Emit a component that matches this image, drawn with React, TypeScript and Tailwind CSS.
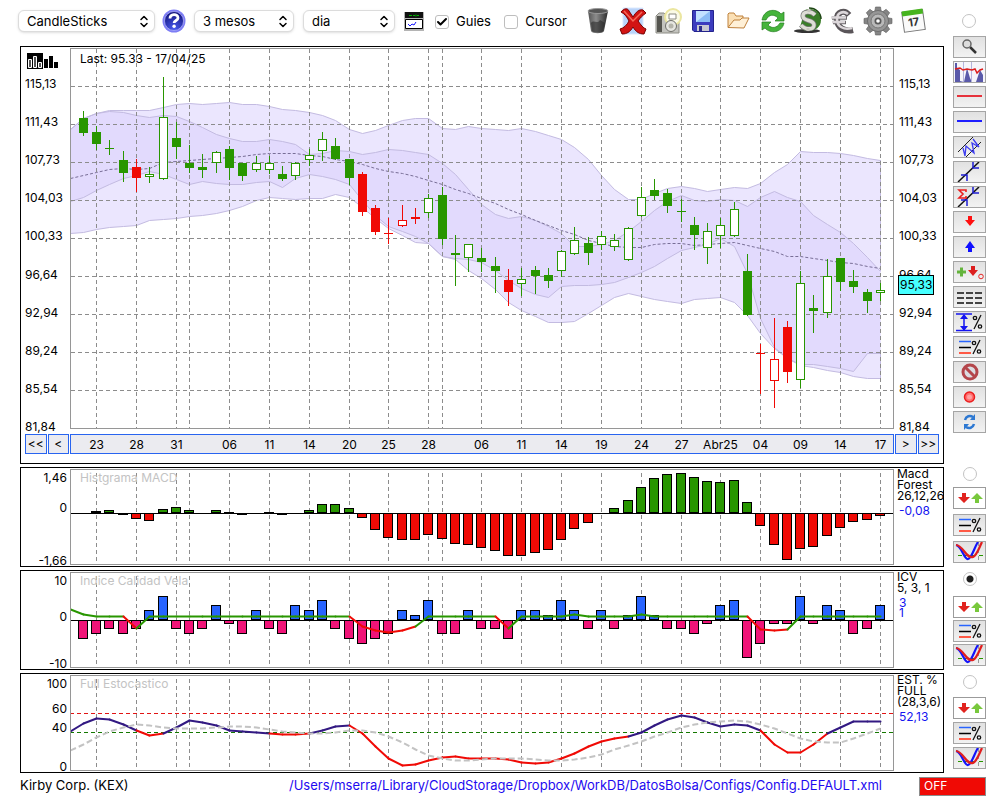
import { useState } from 'react';
import type { ReactNode } from 'react';
import { Check, ChevronDown, ChevronUp } from 'lucide-react';

type Pt = [number, number];
type Kind = 'g' | 'G' | 'r' | 'R';
type Candle = [number, number, number, number, Kind];

const GREEN = '#289600';
const RED = '#f00a05';
const PURPLE = '#321982';

// session index -> x on the chart
const xAt = (i: number) => (i < 0 ? 70 : Math.floor(83.4 + 13.283 * i));

const gridCols = [1, 4, 7, 8, 11, 14, 17, 20, 23, 26, 27, 30, 33, 36, 39, 42, 45, 48, 51, 54, 57, 60];
const gridRows = [86, 124, 162, 200, 238, 276, 314, 352, 390];

const dates: [number, string][] = [
  [1, '23'], [4, '28'], [7, '31'], [11, '06'], [14, '11'], [17, '14'], [20, '20'], [23, '25'], [26, '28'],
  [30, '06'], [33, '11'], [36, '14'], [39, '19'], [42, '24'], [45, '27'], [48, 'Abr25'], [51, '04'],
  [54, '09'], [57, '14'], [60, '17'],
];

const prices = ['115,13', '111,43', '107,73', '104,03', '100,33', '96,64', '92,94', '89,24', '85,54', '81,84'];

// high, body top, body bottom, low
const candles: Candle[] = [
  [111, 118, 133, 136, 'g'], [126, 132, 144, 150, 'g'], [140, 148, 149, 155, 'g'], [151, 160, 173, 182, 'g'],
  [159, 167, 178, 192, 'r'], [167, 174, 177, 183, 'G'], [77, 117, 179, 180, 'G'], [122, 138, 147, 159, 'g'],
  [145, 163, 168, 173, 'g'], [154, 167, 170, 178, 'g'], [151, 152, 163, 173, 'G'], [146, 149, 168, 180, 'g'],
  [163, 163, 176, 181, 'g'], [156, 163, 170, 172, 'G'], [156, 163, 170, 174, 'G'], [166, 174, 179, 181, 'g'],
  [162, 163, 176, 180, 'G'], [149, 155, 160, 166, 'G'], [132, 139, 151, 161, 'G'], [138, 146, 159, 160, 'g'],
  [159, 159, 178, 185, 'g'], [172, 174, 212, 216, 'r'], [205, 208, 232, 235, 'r'], [218, 233, 234, 244, 'r'],
  [205, 220, 226, 227, 'R'], [208, 217, 219, 224, 'r'], [194, 198, 213, 218, 'G'], [187, 195, 239, 245, 'g'],
  [235, 253, 255, 286, 'g'], [244, 244, 258, 272, 'G'], [248, 258, 262, 272, 'g'], [257, 266, 271, 293, 'g'],
  [269, 280, 292, 306, 'r'], [268, 279, 284, 296, 'G'], [266, 270, 276, 294, 'g'], [268, 275, 281, 288, 'g'],
  [250, 251, 271, 277, 'G'], [227, 240, 254, 255, 'G'], [237, 243, 253, 265, 'g'], [231, 236, 245, 250, 'G'],
  [234, 240, 247, 251, 'G'], [227, 228, 260, 261, 'G'], [187, 197, 216, 217, 'G'], [179, 190, 196, 200, 'g'],
  [189, 193, 206, 213, 'g'], [199, 211, 212, 222, 'g'], [217, 225, 235, 250, 'g'], [223, 231, 248, 264, 'G'],
  [218, 225, 236, 248, 'G'], [202, 209, 236, 237, 'G'], [254, 271, 315, 316, 'g'], [344, 353, 354, 394, 'r'],
  [318, 359, 381, 408, 'R'], [321, 327, 372, 383, 'r'], [271, 283, 380, 388, 'G'], [295, 308, 311, 333, 'g'],
  [259, 276, 313, 318, 'G'], [258, 258, 282, 291, 'g'], [270, 281, 287, 293, 'g'], [289, 292, 301, 313, 'g'],
  [283, 290, 293, 301, 'G'],
];

const outerTop = [129, 118, 113, 110, 110, 110, 110, 107, 104, 103, 104, 103, 102, 104, 104, 106, 109, 110, 112, 115, 120, 129, 133, 130, 125, 120, 118, 118, 128, 129, 126, 128, 129, 130, 128, 131, 135, 139, 147, 159, 175, 189, 199, 199, 193, 188, 186, 188, 191, 189, 187, 188, 183, 172, 164, 151, 152, 152, 153, 155, 158, 160];
const innerTop = [129, 118, 113, 111, 112, 115, 117, 115, 116, 121, 127, 134, 138, 141, 141, 139, 141, 144, 154, 153, 150, 151, 154, 152, 149, 150, 152, 154, 163, 174, 189, 204, 214, 218, 216, 220, 226, 233, 246, 246, 244, 240, 231, 221, 210, 201, 195, 200, 201, 199, 200, 206, 197, 191, 197, 201, 215, 224, 232, 243, 257, 271];
const innerLow = [201, 197, 190, 184, 178, 175, 171, 174, 179, 184, 181, 183, 184, 184, 182, 181, 187, 178, 174, 176, 179, 184, 200, 215, 226, 231, 236, 243, 256, 258, 259, 262, 270, 280, 288, 294, 297, 286, 285, 285, 284, 282, 277, 272, 266, 258, 250, 247, 244, 238, 246, 273, 318, 347, 358, 364, 364, 366, 368, 371, 353, 353];
const outerLow = [233, 232, 229, 227, 226, 225, 220, 219, 218, 216, 215, 213, 210, 206, 200, 197, 198, 199, 198, 198, 194, 197, 207, 218, 228, 235, 242, 243, 256, 259, 270, 278, 289, 302, 310, 316, 322, 322, 321, 313, 305, 297, 293, 296, 299, 301, 303, 299, 298, 297, 302, 315, 333, 348, 358, 365, 367, 370, 372, 376, 378, 378];
const middle = [178, 175, 172, 169, 168, 169, 168, 162, 161, 160, 159, 158, 157, 156, 154, 153, 153, 153, 155, 156, 159, 161, 164, 168, 171, 173, 176, 180, 184, 189, 193, 198, 203, 209, 214, 220, 225, 230, 234, 240, 243, 246, 247, 247, 244, 243, 243, 245, 244, 243, 242, 245, 248, 251, 256, 256, 258, 260, 262, 263, 266, 268];

const macd = [0, 2, 3, -1, -6, -8, 4, 6, 3, 0, 3, 1, -1, 0, 1, -1, 0, 3, 9, 9, 5, -5, -17, -25, -27, -27, -22, -26, -31, -32, -35, -38, -43, -43, -40, -37, -27, -16, -10, 0, 5, 13, 26, 35, 39, 40, 36, 32, 31, 33, 11, -13, -32, -47, -36, -34, -23, -15, -9, -7, -3];
const icv = [-19, -14, -9, -14, -9, 10, 24, -9, -14, -9, 15, -4, -14, 10, -9, -14, 15, 10, 20, -9, -19, -24, -19, -14, 10, 5, 20, -14, -14, 10, -9, -9, -19, 10, 10, 5, 20, 10, -9, 10, -9, 5, 24, 5, -9, -9, -14, -4, 15, 20, -38, -24, -4, -4, 24, -4, 15, 10, -14, -9, 15];
const icvLine = [609, 614, 616, 616, 616, 628, 616, 616, 616, 616, 616, 616, 616, 616, 616, 616, 616, 616, 616, 616, 616, 616, 626, 630, 632, 630, 626, 616, 616, 616, 616, 616, 616, 628, 616, 616, 616, 616, 614, 616, 616, 616, 616, 614, 616, 616, 616, 616, 616, 616, 616, 616, 629, 630, 629, 616, 616, 616, 616, 616, 616, 616];
const icvRed = [4, 21, 22, 23, 24, 25, 32, 51, 52, 53];
const stoch = [731, 723, 718, 719, 724, 730, 735, 733, 727, 720, 722, 725, 730, 731, 732, 733, 734, 734, 733, 730, 726, 725, 733, 746, 758, 765, 764, 760, 757, 756, 758, 758, 758, 759, 762, 763, 762, 758, 753, 746, 741, 738, 736, 732, 725, 719, 715, 717, 722, 726, 724, 725, 730, 744, 752, 752, 744, 733, 727, 721, 721, 721];
const signal = [750, 744, 737, 731, 727, 724, 725, 727, 728, 728, 728, 727, 726, 726, 727, 729, 731, 732, 733, 733, 732, 730, 730, 732, 736, 742, 749, 755, 758, 760, 760, 759, 758, 758, 758, 759, 760, 760, 759, 757, 754, 749, 745, 741, 736, 732, 727, 724, 722, 721, 720, 721, 724, 728, 733, 738, 741, 742, 742, 738, 733, 728];
const isStochRed = (i: number) => i === 5 || i === 6 || (i >= 15 && i <= 17) || (i >= 21 && i <= 41) || (i >= 52 && i <= 56);

const points = (ys: number[]): Pt[] => ys.map((y, k) => [xAt(k - 1) + 0.5, y + 0.5]);
const toStr = (pts: Pt[]) => pts.map((p) => p.join(',')).join(' ');
const band = (top: number[], low: number[]) => toStr([...points(top), ...points(low).reverse()]);

const Plot = ({ top, height, children }: { top: number; height: number; children: ReactNode }) => (
  <svg className="block h-full w-full" viewBox={`71 ${top} 822 ${height}`} preserveAspectRatio="none">
    {children}
  </svg>
);

const GridColumns = ({ from, to }: { from: number; to: number }) => (
  <g stroke="#8c8c8c" strokeDasharray="4 3" shapeRendering="crispEdges">
    {gridCols.map((i) => (
      <line key={i} x1={xAt(i) + 0.5} x2={xAt(i) + 0.5} y1={from} y2={to} />
    ))}
  </g>
);

const Bars = ({ data, zero, up, down }: { data: number[]; zero: number; up: string; down: string }) => (
  <g stroke="#000" shapeRendering="crispEdges">
    {data.map((v, i) =>
      v === 0 ? null : (
        <rect
          key={i}
          x={xAt(i) - 4.5}
          width={9}
          y={(v > 0 ? zero - v : zero) + 0.5}
          height={Math.max(Math.abs(v) - 1, 1)}
          fill={v > 0 ? up : down}
        />
      ),
    )}
    <line x1={70} x2={894} y1={zero + 0.5} y2={zero + 0.5} />
  </g>
);

const Segments = ({ data, color }: { data: number[]; color: (i: number) => string }) => {
  const pts = points(data);
  return (
    <g strokeWidth={2} strokeLinecap="round">
      {pts.slice(1).map((p, i) => (
        <line key={i} x1={pts[i][0]} y1={pts[i][1]} x2={p[0]} y2={p[1]} stroke={color(i)} />
      ))}
    </g>
  );
};

const Candles = () => (
  <g shapeRendering="crispEdges">
    {candles.map(([high, top, bottom, low, kind], i) => {
      const color = kind === 'g' || kind === 'G' ? GREEN : RED;
      const hollow = kind === 'G' || kind === 'R';
      const x = xAt(i);
      return (
        <g key={i}>
          <rect x={x} y={high} width={1} height={low - high} fill={color} />
          <rect x={x - 4} y={top} width={9} height={bottom - top} fill={color} />
          {hollow && <rect x={x - 3} y={top + 1} width={7} height={bottom - top - 2} fill="#fff" />}
        </g>
      );
    })}
  </g>
);

const PriceLabels = () => (
  <div className="flex h-[353px] flex-col justify-between leading-[10px]">
    {prices.map((p) => (
      <span key={p}>{p}</span>
    ))}
  </div>
);

const HistogramIcon = () => (
  <svg className="h-4 w-8" viewBox="0 0 32 16">
    <path d="M0 0h16v16H0z" fill="#000" />
    <path d="M1.500 6.500h3v8h-3zM6.500 3.500h3v11h-3zM11.500 9.500h3v5h-3z" fill="#555" stroke="#fff" />
    <path d="M17 6h4v9h-4zM22 3h4v12h-4zM27 9h4v6h-4z" fill="#000" />
  </svg>
);

/* Toolbar icons */

const HelpIcon = () => (
  <svg className="size-6" viewBox="0 0 24 24">
    <defs>
      <radialGradient id="help" cx="50%" cy="90%" r="90%">
        <stop offset="0" stopColor="#4a5cf0" />
        <stop offset="1" stopColor="#101078" />
      </radialGradient>
    </defs>
    <circle cx="12" cy="12" r="11.500" fill="#7d7df5" />
    <circle cx="12" cy="12" r="9.500" fill="url(#help)" stroke="#c8c8ff" strokeWidth=".6" />
    <path d="M8 9.500c0-5 8-5 8-.6 0 2.600-3.900 2.500-3.900 5.100" fill="none" stroke="#fff" strokeWidth="2.800" />
    <circle cx="12.100" cy="17.300" r="1.700" fill="#fff" />
  </svg>
);

const WindowIcon = () => (
  <svg className="h-[19px] w-5" viewBox="0 0 20 19">
    <path d="M0 0h20v19H0z" fill="#b4b4b4" />
    <path d="M1 0h18v6H1z" fill="#111" />
    <path d="M5 3.500h3m1 0h2m1-1v2m1-1h2" stroke="#00b400" />
    <path d="M1.500 7.500h17v9h-17z" fill="#fff" stroke="#000" />
    <path d="M4 12l2 2 2-2 2 1 2-3" fill="none" stroke="#1414ff" />
  </svg>
);

const TrashIcon = () => (
  <svg className="h-7 w-6" viewBox="0 0 24 28">
    <defs>
      <linearGradient id="bin">
        <stop offset="0" stopColor="#555" />
        <stop offset=".4" stopColor="#8c8c8c" />
        <stop offset="1" stopColor="#2a2a2a" />
      </linearGradient>
    </defs>
    <path d="M2 4l3 20c1 3 12 3 13 0l4-20z" fill="url(#bin)" />
    <ellipse cx="12" cy="4" rx="10" ry="2.500" fill="#555" stroke="#999" />
    <path d="M5 16c3-4 6 2 9-3l5 3-2 8c-2 2-9 2-11 0z" fill="#222" opacity=".55" />
  </svg>
);

const DeleteIcon = () => (
  <svg className="size-7" viewBox="0 0 28 28">
    <path d="M4 1h20v26H4z" fill="#b9d4fa" stroke="#dbe8fd" />
    <path d="M2 5c3-4 7-4 8-1l4 6c3-5 6-8 10-7l3 3c-4 3-6 5-8 8 3 4 5 7 8 8l-2 5c-5 0-8-2-11-7-3 5-6 7-11 7l-2-5c4-1 7-4 9-8-2-4-4-7-8-9z" fill="#d21414" stroke="#780000" />
    <path d="M5 4l9 10 9-9" fill="none" stroke="#f56a5a" strokeWidth="1.500" />
  </svg>
);

const CameraIcon = () => (
  <svg className="size-7" viewBox="0 0 28 28">
    <path d="M2 9l3-3h5l2 2h13v18H2z" fill="#c3c3be" stroke="#8c8c85" />
    <path d="M3 9h5v16H3z" fill="#55554f" />
    <circle cx="19" cy="10" r="8" fill="#fafae6" stroke="#ebe6a0" strokeWidth="2" />
    <path d="M15 7h7v5h-7z" fill="#fff" stroke="#8c8c82" />
    <circle cx="17" cy="19" r="5.500" fill="#e6e6e1" stroke="#6e6e69" />
    <circle cx="17" cy="19" r="2.500" fill="#b4b4aa" />
  </svg>
);

const SaveIcon = () => (
  <svg className="size-[22px]" viewBox="0 0 22 22">
    <path d="M.5 .5h21v21H2l-1.500-1.500z" fill="#3c3cbe" stroke="#23238c" />
    <path d="M4 1h14v11H4z" fill="#c3e1ff" />
    <path d="M4 12L18 1v11z" fill="#8cbcf5" />
    <path d="M5 15h12v6H5z" fill="#c8c8d2" />
    <path d="M7 16h3v5H7z" fill="#2d2d8c" />
  </svg>
);

const FolderIcon = () => (
  <svg className="size-6" viewBox="0 0 24 24" fill="#fbe0b5" stroke="#bf813c" strokeLinejoin="round">
    <path d="M2 18V5l1-1h5l2 3h7v4" />
    <path d="M2 18.500L8 11h6l2-2h7l-4 8-1 2z" fill="#fff0d7" />
  </svg>
);

const RefreshIcon = () => (
  <svg className="size-6" viewBox="0 0 24 24" fill="#46b43c" stroke="#237d1e" strokeWidth=".7">
    <path d="M1 11C3 0 15-1 20 5l3-2v9h-9l3-3C13 5 8 5 5 11z" />
    <path d="M23 14c-2 10-14 11-19 5l-3 2v-8h9l-3 3c4 4 9 3 12-2z" />
  </svg>
);

const DollarIcon = () => (
  <svg className="size-7" viewBox="0 0 28 28">
    <ellipse cx="13" cy="24" rx="13" ry="2" fill="#333" />
    <path d="M11 3c8-3 16 2 16 10 0 7-6 11-12 11-4 0-7-1-9-4z" fill="#3a7d28" />
    <path d="M15 1c7 0 12 5 12 11" fill="none" stroke="#1e4614" strokeWidth="1.500" />
    <path d="M21 8c-4-4-12-4-12 1 0 6 11 3 11 9 0 5-9 5-13 0" fill="none" stroke="#777" strokeWidth="5" />
    <path d="M21 8c-4-4-12-4-12 1 0 6 11 3 11 9 0 5-9 5-13 0" fill="none" stroke="#deded5" strokeWidth="3.500" />
    <path d="M15 2v3M14 21v3" stroke="#c8c8be" strokeWidth="3" />
  </svg>
);

const EuroIcon = () => (
  <svg className="size-7" viewBox="0 0 28 28" fill="none">
    <path d="M20 8C15 2 8 5 8 12c0 9 8 13 16 11" stroke="#5a5559" strokeWidth="6" />
    <path d="M3 11h15M4 15.500h13" stroke="#6e696c" strokeWidth="3.500" />
    <path d="M19 7c-5-4-11-1-11 5 0 8 7 11 15 9M2 10.500h15M3 15h13" stroke="#dcd7da" strokeWidth="2.500" />
  </svg>
);

const GearIcon = () => (
  <svg className="size-[30px]" viewBox="0 0 30 30">
    <g fill="#858585" stroke="#5f5f5f" strokeWidth=".6">
      {[0, 45, 90, 135, 180, 225, 270, 315].map((a) => (
        <path key={a} d="M11.500 7l1-6h5l1 6z" transform={`rotate(${a} 15 15)`} />
      ))}
    </g>
    <circle cx="15" cy="15" r="10.500" fill="#969696" stroke="#6e6e6e" />
    <circle cx="15" cy="15" r="7" fill="#b9b9b9" stroke="#777" />
    <circle cx="15" cy="15" r="3.500" fill="#5a5a5a" />
    <circle cx="15" cy="15" r="1.800" fill="#fff" />
  </svg>
);

const CalendarIcon = () => (
  <svg className="size-[26px]" viewBox="0 0 26 26">
    <g transform="rotate(-8 13 13)">
      <path d="M3 3h21v20H3z" fill="#fafafa" stroke="#777" />
      <path d="M3 2h21v5H3z" fill="#46b41e" />
      <text x="13.500" y="18" textAnchor="middle" fontSize="11" fontWeight="700" fill="#333">17</text>
    </g>
  </svg>
);

/* Side strip icons, all drawn on a 31x20 face */

const Face = ({ children }: { children: ReactNode }) => (
  <svg className="block h-5 w-[31px]" viewBox="0 0 31 20" fill="none">
    {children}
  </svg>
);

const RedDown = ({ x }: { x: number }) => (
  <path d={`M${x - 2} 5h4v4h4l-6 6-6-6h4z`} fill="#e1231e" />
);

const Percent = ({ x }: { x: number }) => (
  <g stroke="#111" strokeWidth="1.300">
    <path d={`M${x + 7} 3l-7 14`} />
    <circle cx={x + 1} cy="6" r="1.700" />
    <circle cx={x + 6} cy="14.500" r="1.700" />
  </g>
);

const Levels = () => (
  <Face>
    <path d="M5 4.500h12" stroke="#2864ff" strokeWidth="1.500" />
    <path d="M5 10.500h12" stroke="#000" strokeWidth="1.500" />
    <path d="M5 16h12" stroke="#ff5a46" strokeWidth="2" />
    <Percent x={19} />
  </Face>
);

const Trend = ({ sigma }: { sigma?: boolean }) => (
  <Face>
    <path d="M4 20L25 0" stroke="#111" strokeWidth="1.500" />
    <path d="M7 13h6v6M19 0v6h6" stroke="#1e1ed2" strokeWidth="1.500" />
    {sigma && <path d="M12 5V3H5l4 4-4 4h7V9" stroke="#eb1e1e" strokeWidth="1.600" />}
  </Face>
);

const Arrows = () => (
  <Face>
    <RedDown x={10} />
    <path d="M21 15h4v-4h4l-6-6-6 6h4z" fill="#78c83c" />
  </Face>
);

const Crossing = () => (
  <Face>
    <path d="M4 13.500h26" stroke="#289600" strokeDasharray="4 3" />
    <path d="M24.500 0v20" stroke="#999" strokeDasharray="4 3" />
    <path d="M2 3c6 1 8 15 12 14S20 6 24 0" stroke="#1414fa" strokeWidth="2.200" />
    <path d="M2 3c7 0 10 14 17 12 4-2 6-9 9-15" stroke="#e11e1e" strokeWidth="2.200" />
  </Face>
);

const tools: { name: string; icon: ReactNode }[] = [
  {
    name: 'Zoom',
    icon: (
      <Face>
        <path d="M16 10l6 6" stroke="#333" strokeWidth="2.500" />
        <circle cx="13" cy="7" r="4" fill="#dcdcdc" stroke="#666" strokeWidth="1.500" />
      </Face>
    ),
  },
  {
    name: 'Volume',
    icon: (
      <Face>
        <path d="M0 0h31v20H0z" fill="#f5f5fa" />
        <path d="M1 20V1h2v5l3 2v11l4 1 3-14 3 10 2 4h4l4-12 3 5v7z" fill="#5a5aaa" />
        <path d="M9.500 0v20M17.500 0v20" stroke="#b4b4dc" />
        <path d="M1 7l5-1 3 2 4-1 5 1 3-1 2 4 3-3 3-1" stroke="#dc1e1e" strokeWidth="1.500" />
      </Face>
    ),
  },
  { name: 'Red line', icon: <Face><path d="M3 9h25" stroke="#e6323c" strokeWidth="2" /></Face> },
  { name: 'Blue line', icon: <Face><path d="M3 9h25" stroke="#1e1eff" strokeWidth="2" /></Face> },
  {
    name: 'Channel',
    icon: (
      <Face>
        <path d="M4 15L19 0M12 20L27 5" stroke="#222" />
        <path d="M9 11l2 8 1-10 8 7-2-10 7 4-6-8" stroke="#3c3cf0" strokeWidth="1.300" />
      </Face>
    ),
  },
  { name: 'Trend', icon: <Trend /> },
  { name: 'Regression', icon: <Trend sigma /> },
  { name: 'Sell', icon: <Face><path d="M14 4h4v4h3l-5 6-5-6h3z" fill="#ff0f0f" /></Face> },
  { name: 'Buy', icon: <Face><path d="M14 15h4v-4h3l-5-7-5 7h3z" fill="#0f0fff" /></Face> },
  {
    name: 'Signals',
    icon: (
      <Face>
        <path d="M3 10h9M7.500 5.500v9" stroke="#64b43c" strokeWidth="3" />
        <path d="M17 4h4v4h3l-5 6-5-6h3z" fill="#dc1e1e" />
        <circle cx="27" cy="14.500" r="2.300" stroke="#e62828" />
      </Face>
    ),
  },
  {
    name: 'Dashes',
    icon: <Face><path d="M3 6h25M3 11h25M3 16h25" stroke="#444" strokeWidth="2" strokeDasharray="7 2" /></Face>,
  },
  {
    name: 'Range',
    icon: (
      <Face>
        <path d="M2 2h16M2 18.500h16M10 3v15" stroke="#1414f0" strokeWidth="1.500" />
        <path d="M6 7l4-5 4 5zM6 14l4 5 4-5z" fill="#1414f0" />
        <Percent x={20} />
      </Face>
    ),
  },
  { name: 'Levels', icon: <Levels /> },
  {
    name: 'Clear',
    icon: (
      <Face>
        <circle cx="16" cy="10" r="7" fill="#dcdce1" stroke="#b4464b" strokeWidth="3" />
        <path d="M11 5l10 10" stroke="#b4464b" strokeWidth="3" />
      </Face>
    ),
  },
  {
    name: 'Record',
    icon: (
      <Face>
        <circle cx="15.500" cy="10" r="5" fill="#ff6e6e" stroke="#eb1e1e" strokeWidth="1.500" />
        <circle cx="15.500" cy="10" r="2.500" fill="#ffa0a0" />
      </Face>
    ),
  },
  {
    name: 'Reload',
    icon: (
      <Face>
        <path d="M11 8c1-4 5-5 8-3M20 12c-1 4-5 5-8 3" stroke="#2d78d2" strokeWidth="2.500" />
        <path d="M21 2v6h-5zM10 18v-6h5z" fill="#2d78d2" />
      </Face>
    ),
  },
];

const ToolButton = ({ name, white, children }: { name: string; white?: boolean; children: ReactNode }) => (
  <button
    type="button"
    aria-label={name}
    className={
      white
        ? 'h-[22px] w-[33px] border border-[#9b9b9b] bg-white'
        : 'h-[22px] w-[33px] border border-[#a5a5a5] bg-linear-to-b from-[#e1e1e1] to-[#f2f2f2]'
    }
  >
    {children}
  </button>
);

const Radio = ({ label, checked, onChange }: { label: string; checked: boolean; onChange: () => void }) => (
  <input
    type="radio"
    name="target"
    aria-label={label}
    checked={checked}
    onChange={onChange}
    className="block size-[14px] shrink-0 appearance-none rounded-full border border-[#c3c3c3] bg-white checked:bg-[radial-gradient(circle,#1e1e1e_3px,#fff_4px)]"
  />
);

const Select = ({ label, value, width }: { label: string; value: string; width: string }) => (
  <div className={`relative ${width}`}>
    <select
      aria-label={label}
      defaultValue={value}
      className="h-[22px] w-full appearance-none rounded-md border border-[#dcdcdc] bg-white pl-2 text-[13px] leading-5 shadow-sm"
    >
      <option>{value}</option>
    </select>
    <span className="pointer-events-none absolute inset-y-0 right-[5px] flex flex-col items-center justify-center">
      <ChevronUp className="-mb-[5px] size-3" strokeWidth={3} />
      <ChevronDown className="size-3" strokeWidth={3} />
    </span>
  </div>
);

const CheckOption = ({ label, initial }: { label: string; initial?: boolean }) => (
  <label className="flex items-center gap-[7px]">
    <span className="relative block size-[14px]">
      <input
        type="checkbox"
        defaultChecked={initial}
        className="peer block size-[14px] appearance-none rounded-[3px] border border-[#bebebe] bg-white"
      />
      <Check className="pointer-events-none absolute inset-px hidden size-3 peer-checked:block" strokeWidth={4} />
    </span>
    {label}
  </label>
);

const ScrollButton = ({ children, name }: { children: ReactNode; name: string }) => (
  <button type="button" aria-label={name} className="h-5 flex-1 border border-[#2864f0] bg-[#ebebf0] text-center">
    {children}
  </button>
);

type IndicatorProps = {
  title: string;
  rows: string;
  scale: string[];
  info: string[];
  values: string[];
  top: number;
  gap: string;
  checked: boolean;
  onSelect: () => void;
  children: ReactNode;
};

const Indicator = ({ title, rows, scale, info, values, top, gap, checked, onSelect, children }: IndicatorProps) => (
  <section className="flex gap-[9px]">
    <div className="flex h-[100px] min-w-0 flex-1 overflow-hidden border border-black">
      <div className={`grid w-[49px] shrink-0 pt-[5px] pr-[3px] text-right leading-[10px] ${rows}`}>
        {scale.map((s) => (
          <span key={s}>{s}</span>
        ))}
      </div>
      <div className="relative mt-px h-24 min-w-0 flex-1 border border-[#969696]">
        <Plot top={top} height={94}>
          {children}
        </Plot>
        <h2 className="absolute top-0 left-[9px] leading-4 text-[#c3c3c3]">{title}</h2>
      </div>
      <div className="w-[49px] shrink-0 pl-[3px] leading-[11px] whitespace-nowrap">
        {info.map((s) => (
          <div key={s}>{s}</div>
        ))}
        <div className="pt-[5px] pl-[2px] leading-[10px] text-[#1414f0]">
          {values.map((v) => (
            <div key={v}>{v}</div>
          ))}
        </div>
      </div>
    </div>
    <div className={`flex w-[33px] flex-col items-center justify-end ${gap}`}>
      <div className="flex flex-1 items-start">
        <Radio label={title} checked={checked} onChange={onSelect} />
      </div>
      <ToolButton name={`${title}: senyals`} white><Arrows /></ToolButton>
      <ToolButton name={`${title}: nivells`}><Levels /></ToolButton>
      <ToolButton name={`${title}: creuaments`}><Crossing /></ToolButton>
    </div>
  </section>
);

export default function App() {
  const [target, setTarget] = useState('icv');

  const actions: { name: string; icon: ReactNode }[] = [
    { name: 'Paperera', icon: <TrashIcon /> },
    { name: 'Esborrar', icon: <DeleteIcon /> },
    { name: 'Captura', icon: <CameraIcon /> },
    { name: 'Desar', icon: <SaveIcon /> },
    { name: 'Obrir', icon: <FolderIcon /> },
    { name: 'Actualitzar', icon: <RefreshIcon /> },
    { name: 'Dolar', icon: <DollarIcon /> },
    { name: 'Euro', icon: <EuroIcon /> },
    { name: 'Preferencies', icon: <GearIcon /> },
    { name: 'Calendari', icon: <CalendarIcon /> },
  ];

  return (
    <div className="min-h-screen bg-white pr-[14px] font-[Inter,'Liberation_Sans',sans-serif] text-xs text-black">
      {/* Toolbar */}
      <header className="flex h-[46px] items-center pr-[10px] pb-1 pl-[18px] text-[13px]">
        <Select label="Tipus de gràfic" value="CandleSticks" width="w-[137px]" />
        <button type="button" aria-label="Ajuda" className="mr-2 ml-[7px]"><HelpIcon /></button>
        <Select label="Període" value="3 mesos" width="w-[100px]" />
        <div className="ml-[9px]">
          <Select label="Interval" value="dia" width="w-[92px]" />
        </div>
        <button type="button" aria-label="Finestra" className="mr-[11px] ml-[9px]"><WindowIcon /></button>
        <div className="flex w-[132px] justify-between pt-[2px]">
          <CheckOption label="Guies" initial />
          <CheckOption label="Cursor" />
        </div>
        <div className="ml-[13px] flex">
          {actions.map((a) => (
            <button key={a.name} type="button" aria-label={a.name} className="flex w-[35px] items-center justify-center">
              {a.icon}
            </button>
          ))}
        </div>
        <div className="ml-auto">
          <Radio label="Gràfic" checked={target === 'main'} onChange={() => setTarget('main')} />
        </div>
      </header>

      <main className="flex flex-col gap-[3px] pl-5">
        {/* Price chart */}
        <section className="flex gap-[9px]">
          <div className="min-w-0 flex-1 border border-black pb-[9px]">
            <div className="flex h-[382px] pt-px">
              <div className="w-[49px] shrink-0 pt-[5px] pl-1">
                <button type="button" aria-label="Histograma" className="mb-[10px] block pl-[2px]"><HistogramIcon /></button>
                <PriceLabels />
              </div>
              <div className="relative min-w-0 flex-1 border border-[#969696]">
                <Plot top={49} height={379}>
                  <polygon points={band(outerTop, outerLow)} fill="#ebe6fe" />
                  <polygon points={band(innerTop, innerLow)} fill="#e2dafd" />
                  {[outerTop, innerTop, innerLow, outerLow].map((b, k) => (
                    <polyline key={k} points={toStr(points(b))} fill="none" stroke="#c3bbe1" />
                  ))}
                  <path d="M880.500 160v111M880.500 353v25" stroke="#c3bbe1" />
                  <polyline points={toStr(points(middle))} fill="none" stroke="#786e96" strokeDasharray="3 2" />
                  <GridColumns from={49} to={428} />
                  <g stroke="#8c8c8c" strokeDasharray="4 3" shapeRendering="crispEdges">
                    {gridRows.map((y) => (
                      <line key={y} x1={71} x2={893} y1={y + 0.5} y2={y + 0.5} />
                    ))}
                  </g>
                  <Candles />
                </Plot>
                <p className="absolute top-[2px] left-[9px] leading-4">Last: 95.33 - 17/04/25</p>
              </div>
              <div className="relative w-[49px] shrink-0 pt-[31px] pl-[5px]">
                <PriceLabels />
                <span className="absolute top-[227px] left-1 h-5 border border-black bg-[#46ffff] px-px leading-[18px]">
                  95,33
                </span>
              </div>
            </div>
            <div className="mt-[5px] flex">
              <div className="flex w-[49px] shrink-0 gap-px pr-px pl-1">
                <ScrollButton name="Inici">&lt;&lt;</ScrollButton>
                <ScrollButton name="Enrere">&lt;</ScrollButton>
              </div>
              <svg className="h-5 min-w-0 flex-1 border border-[#2864f0] bg-[#ebebf0]">
                {dates.map(([i, text]) => (
                  <text key={i} x={`${((xAt(i) - 70.5) / 822) * 100}%`} y="14" textAnchor="middle">
                    {text}
                  </text>
                ))}
              </svg>
              <div className="flex w-[49px] shrink-0 gap-px pr-1 pl-px">
                <ScrollButton name="Endavant">&gt;</ScrollButton>
                <ScrollButton name="Final">&gt;&gt;</ScrollButton>
              </div>
            </div>
          </div>
          <div className="-mt-[10px] flex w-[33px] flex-col gap-[3px]">
            {tools.map((t) => (
              <ToolButton key={t.name} name={t.name}>
                {t.icon}
              </ToolButton>
            ))}
          </div>
        </section>

        <Indicator
          title="Histgrama MACD"
          rows="grid-rows-[30px_53px_10px]"
          scale={['1,46', '0', '-1,66']}
          info={['Macd', 'Forest', '26,12,26']}
          values={['-0,08']}
          top={470}
          gap="gap-[5px] pb-1"
          checked={target === 'macd'}
          onSelect={() => setTarget('macd')}
        >
          <GridColumns from={473} to={564} />
          <Bars data={macd} zero={513} up={GREEN} down={RED} />
        </Indicator>

        <Indicator
          title="Indice Calidad Vela"
          rows="grid-rows-[36px_47px_10px]"
          scale={['10', '0', '-10']}
          info={['ICV', '5, 3, 1']}
          values={['3', '1']}
          top={573}
          gap="gap-[2px] pt-[2px] pb-1"
          checked={target === 'icv'}
          onSelect={() => setTarget('icv')}
        >
          <GridColumns from={576} to={667} />
          <Bars data={icv} zero={620} up="#2864ff" down="#f01478" />
          <Segments data={icvLine} color={(i) => (icvRed.includes(i) ? RED : GREEN)} />
        </Indicator>

        <Indicator
          title="Full Estocastico"
          rows="grid-rows-[25px_19px_39px_10px]"
          scale={['100', '60', '40', '0']}
          info={['EST. %', 'FULL', '(28,3,6)']}
          values={['52,13']}
          top={676}
          gap="gap-[3px] pt-[2px] pb-1"
          checked={target === 'stoch'}
          onSelect={() => setTarget('stoch')}
        >
          <GridColumns from={679} to={770} />
          <g strokeDasharray="4 3" shapeRendering="crispEdges">
            <path d="M70 713.500h824" stroke="#e11414" />
            <path d="M70 732.500h824" stroke="#147800" />
          </g>
          <Segments data={stoch} color={(i) => (isStochRed(i) ? RED : PURPLE)} />
          <polyline
            points={toStr(points(signal))}
            fill="none"
            stroke="#c3c3c3"
            strokeWidth={2}
            strokeDasharray="6 3"
          />
        </Indicator>
      </main>

      {/* Status bar */}
      <footer className="flex h-[26px] items-center pl-5 text-[13px]">
        <span className="flex-1">Kirby Corp. (KEX)</span>
        <a href="#config" className="mr-[37px] text-[#1e0af0]">
          /Users/mserra/Library/CloudStorage/Dropbox/WorkDB/DatosBolsa/Configs/Config.DEFAULT.xml
        </a>
        <button type="button" className="h-[19px] w-[67px] border border-[#8c8c8c] bg-[#f00a05] pl-1 text-left text-xs text-white">
          OFF
        </button>
      </footer>
    </div>
  );
}
